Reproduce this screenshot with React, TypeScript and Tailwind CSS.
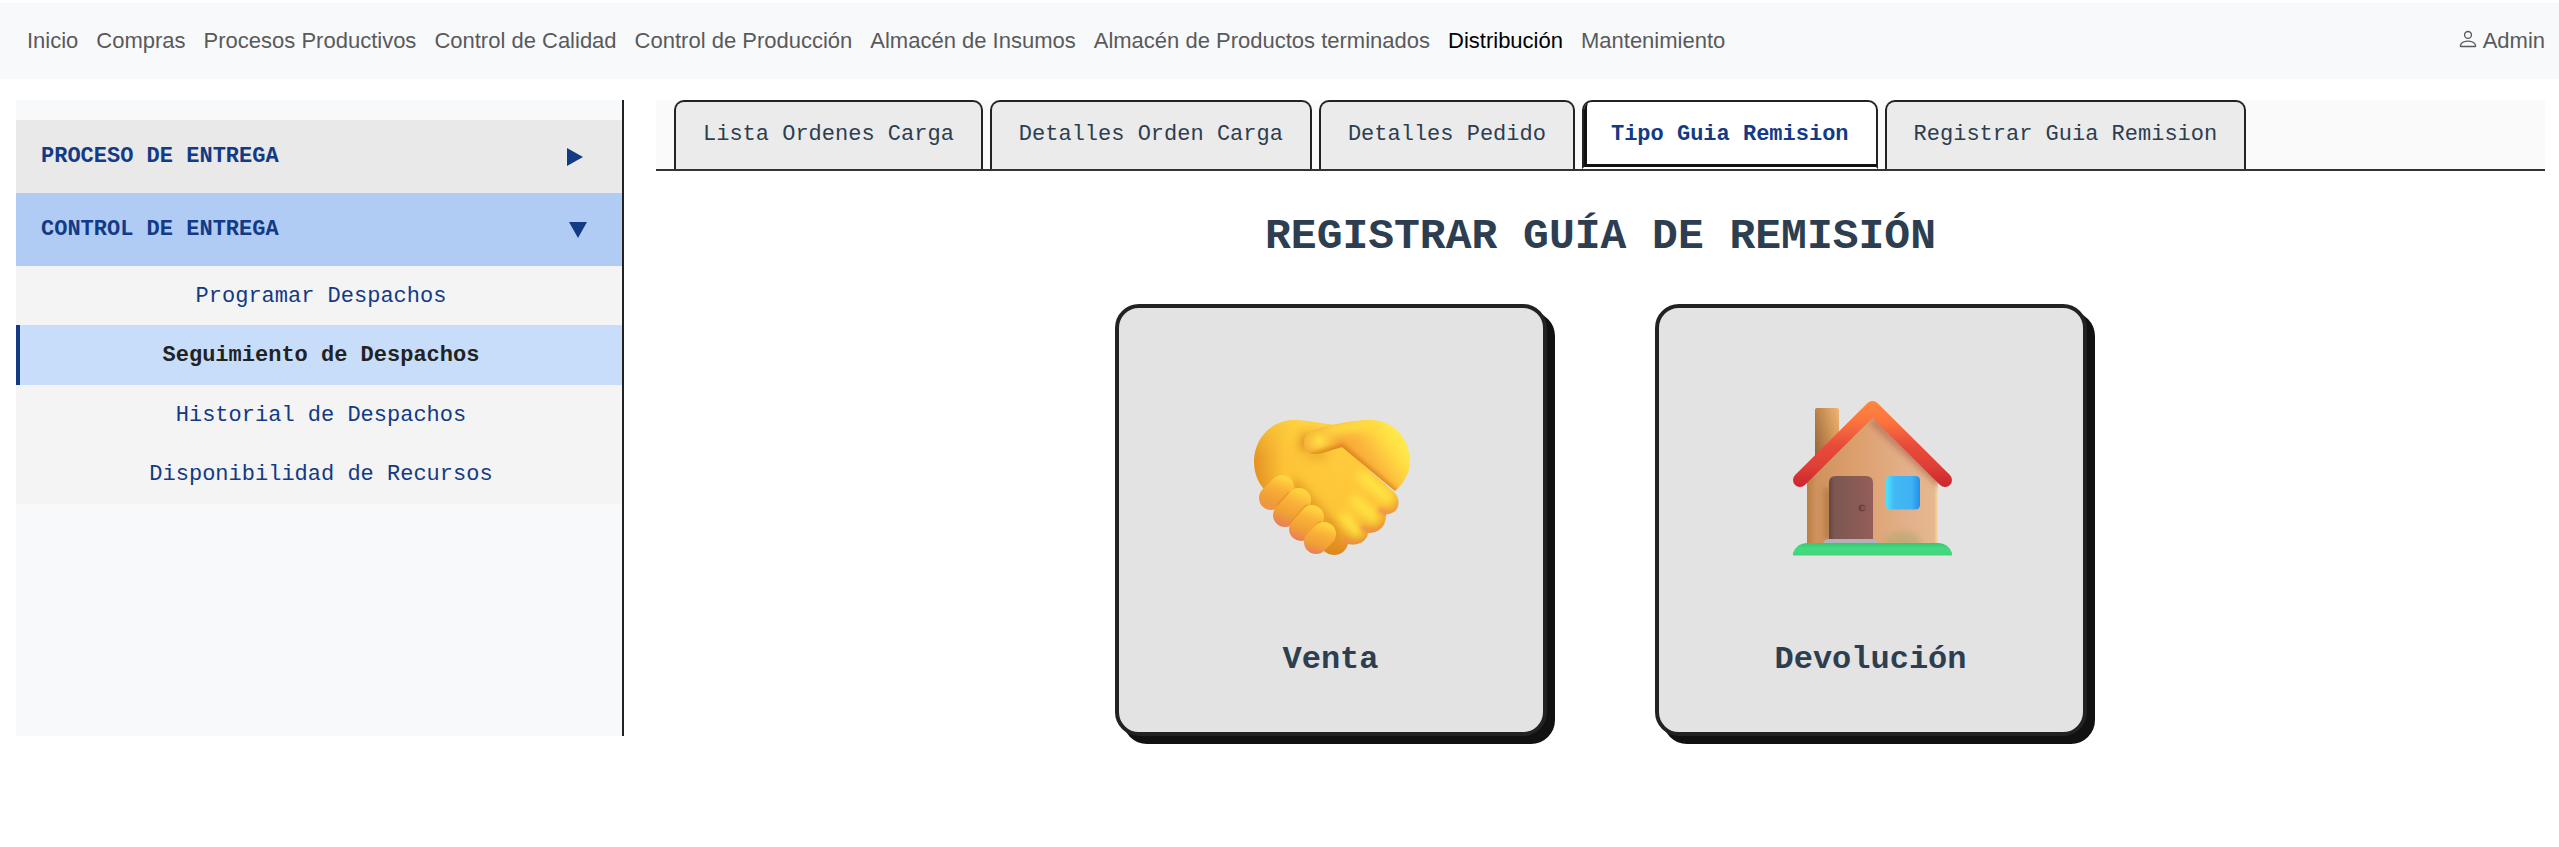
import React from "react";

const modules = [
  "Inicio",
  "Compras",
  "Procesos Productivos",
  "Control de Calidad",
  "Control de Producción",
  "Almacén de Insumos",
  "Almacén de Productos terminados",
  "Distribución",
  "Mantenimiento",
];

const deliveries = [
  "Programar Despachos",
  "Seguimiento de Despachos",
  "Historial de Despachos",
  "Disponibilidad de Recursos",
];

const tabs = [
  "Lista Ordenes Carga",
  "Detalles Orden Carga",
  "Detalles Pedido",
  "Tipo Guia Remision",
  "Registrar Guia Remision",
];

// Start and end of each curled finger's centre line.
const fingers = [
  [50, 108, 61, 97],
  [64, 125, 78, 110],
  [80, 139, 91, 127],
  [95, 152, 103, 144],
];

function Handshake() {
  return (
    <svg viewBox="0 0 220 190" className="h-[190px] w-[220px]" aria-hidden="true">
      <defs>
        <radialGradient id="palm" gradientUnits="userSpaceOnUse" cx="120" cy="70" r="96">
          <stop offset="0" stopColor="#ffcb3c" />
          <stop offset=".6" stopColor="#fdc338" />
          <stop offset="1" stopColor="#dc841c" />
        </radialGradient>
        <linearGradient id="palmTop" x1="0" y1="0" x2="0" y2="1">
          <stop offset="0" stopColor="#ffdb45" stopOpacity=".8" />
          <stop offset=".3" stopColor="#ffcb3c" stopOpacity="0" />
        </linearGradient>
        <linearGradient id="cuff" gradientUnits="userSpaceOnUse" x1="134" y1="78" x2="178" y2="48">
          <stop offset="0" stopColor="#f6a439" />
          <stop offset=".35" stopColor="#fcb53c" />
          <stop offset=".75" stopColor="#ffdb42" />
          <stop offset="1" stopColor="#ffe94a" />
        </linearGradient>
        <radialGradient id="thumbTip" gradientUnits="userSpaceOnUse" cx="98" cy="51" r="22">
          <stop offset="0" stopColor="#ffe443" />
          <stop offset="1" stopColor="#fcc63a" stopOpacity="0" />
        </radialGradient>
        {fingers.map(([x1, y1, x2, y2], i) => (
          <linearGradient key={i} id={`finger${i}`} gradientUnits="userSpaceOnUse" x1={x2} y1={y2 - 10} x2={x1 - 2} y2={y1 + 13}>
            <stop offset="0" stopColor="#ffd53f" />
            <stop offset=".3" stopColor="#fab338" />
            <stop offset=".65" stopColor="#f1a036" />
            <stop offset="1" stopColor={i === 0 ? "#ee9145" : "#e87b59"} />
          </linearGradient>
        ))}
        <filter id="soft" filterUnits="userSpaceOnUse" x="0" y="0" width="220" height="190">
          <feGaussianBlur stdDeviation="4" />
        </filter>
        <filter id="softer" filterUnits="userSpaceOnUse" x="0" y="0" width="220" height="190">
          <feGaussianBlur stdDeviation="2" />
        </filter>
        <filter id="edge" filterUnits="userSpaceOnUse" x="0" y="0" width="220" height="190">
          <feGaussianBlur stdDeviation="1" />
        </filter>
        <clipPath id="handShape">
          <path d="M42 98C34 88 33 78 33 70C34 47 52 30 74 30C90 31 104 34 113 35L122 57L173 102C181 110 178 123 167 124C166 124 165 124 165 125C165 137 157 143 147 143C146 151 138 156 127 154C125 161 120 165 113 165C108 165 104 162 102 160L60 120Z" />
        </clipPath>
        <clipPath id="cuffShape">
          <path d="M174 101L121 57C112 59 103 64 94 64C85 64 82 57 83 50C84 43 90 40 99 38C116 34 132 30 151 30C173 31 189 49 189 71C189 83 183 93 174 101Z" />
        </clipPath>
      </defs>
      <g clipPath="url(#handShape)">
        <rect x="30" y="25" width="160" height="145" fill="url(#palm)" />
        <rect x="30" y="25" width="160" height="145" fill="url(#palmTop)" />
        <path d="M84 60L86 44" stroke="#cf7a12" strokeWidth="11" opacity=".7" filter="url(#soft)" />
        <path d="M88 66L106 66" stroke="#e19a22" strokeWidth="7" opacity=".6" filter="url(#soft)" />
        <path d="M72 92L112 137L112 157" fill="none" stroke="#d98a1c" strokeWidth="9" opacity=".75" filter="url(#soft)" />
        <g stroke="#ffe443" strokeLinecap="round" filter="url(#soft)">
          <path d="M142 87L167 108" strokeWidth="12" />
          <path d="M134 110L153 128" strokeWidth="11" />
          <path d="M124 128L136 142" strokeWidth="11" />
        </g>
        <g fill="none" stroke="#f08c50" strokeWidth="4" filter="url(#softer)">
          <path d="M179 117C175 125 168 126 158 119" />
          <path d="M165 133C160 143 153 144 140 137" />
          <path d="M145 151C139 156 132 157 122 149" />
        </g>
      </g>
      <g clipPath="url(#cuffShape)">
        <rect x="80" y="25" width="112" height="84" fill="url(#cuff)" />
        <path d="M104 41C124 38 135 34 155 34" fill="none" stroke="#ffdc41" strokeWidth="12" filter="url(#soft)" />
        <path d="M82 42V64H98" fill="none" stroke="#f3a538" strokeWidth="6" filter="url(#softer)" />
        <rect x="80" y="25" width="60" height="60" fill="url(#thumbTip)" />
        <path d="M88 67L121 57L175 103" fill="none" stroke="#d57a0e" strokeWidth="6" opacity=".8" filter="url(#softer)" />
      </g>
      {fingers.map(([x1, y1, x2, y2], i) => (
        <g key={i} fill="none" strokeLinecap="round">
          <path d={`M${x1} ${y1}L${x2} ${y2}`} stroke={`url(#finger${i})`} strokeWidth="24" />
          {i < 3 && (
            <path
              d={`M${x1 + 8} ${y1 + 8}L${x2 + 8} ${y2 + 7}`}
              stroke="#c2600a"
              strokeWidth="3"
              opacity=".85"
              filter="url(#edge)"
            />
          )}
        </g>
      ))}
    </svg>
  );
}

function House() {
  return (
    <svg viewBox="0 0 220 200" className="h-[200px] w-[220px]" aria-hidden="true">
      <defs>
        <linearGradient id="wall" x1="0" y1="0" x2="1" y2="0">
          <stop offset="0" stopColor="#b98043" />
          <stop offset=".07" stopColor="#cf925f" />
          <stop offset=".4" stopColor="#dda06f" />
          <stop offset=".8" stopColor="#e3b28c" />
          <stop offset=".97" stopColor="#e6b88f" />
          <stop offset="1" stopColor="#ffdb9e" />
        </linearGradient>
        <linearGradient id="stack" x1="0" y1=".8" x2="1" y2=".1">
          <stop offset="0" stopColor="#966337" />
          <stop offset=".5" stopColor="#c48b51" />
          <stop offset="1" stopColor="#eeb271" />
        </linearGradient>
        <linearGradient id="roof" gradientUnits="userSpaceOnUse" x1="0" y1="22" x2="0" y2="107">
          <stop offset="0" stopColor="#ff8740" />
          <stop offset=".25" stopColor="#fb713e" />
          <stop offset=".5" stopColor="#e94c3a" />
          <stop offset=".75" stopColor="#df4037" />
          <stop offset="1" stopColor="#cc2430" />
        </linearGradient>
        <linearGradient id="door" x1="0" y1="0" x2="1" y2="0">
          <stop offset="0" stopColor="#65443f" />
          <stop offset=".12" stopColor="#7c5751" />
          <stop offset="1" stopColor="#945d59" />
        </linearGradient>
        <linearGradient id="pane" x1="0" y1="0" x2="1" y2="0">
          <stop offset="0" stopColor="#4be4ff" />
          <stop offset=".25" stopColor="#42b8f4" />
          <stop offset=".75" stopColor="#3fb2f5" />
          <stop offset="1" stopColor="#1f91e8" />
        </linearGradient>
        <linearGradient id="grass" x1="0" y1="0" x2="0" y2="1">
          <stop offset="0" stopColor="#3bc371" />
          <stop offset=".4" stopColor="#43db80" />
          <stop offset="1" stopColor="#42d47c" />
        </linearGradient>
        <filter id="shade" filterUnits="userSpaceOnUse" x="0" y="0" width="220" height="200">
          <feGaussianBlur stdDeviation="3" />
        </filter>
        <clipPath id="front">
          <path d="M46 98L111 35L177 98V164H46Z" />
        </clipPath>
      </defs>
      <rect x="54" y="28" width="24" height="60" rx="2" fill="url(#stack)" />
      <g clipPath="url(#front)">
        <rect x="46" y="35" width="131" height="129" fill="url(#wall)" />
        <ellipse cx="142" cy="162" rx="18" ry="11" fill="#b3a86f" opacity=".6" filter="url(#shade)" />
        <path d="M111 40L180 104" stroke="#b56a58" strokeWidth="7" opacity=".8" filter="url(#shade)" />
        <path d="M67 108V160" stroke="#94602f" strokeWidth="5" opacity=".7" filter="url(#shade)" />
      </g>
      <path d="M39 100L111.500 28L184 100" fill="none" stroke="url(#roof)" strokeWidth="14" strokeLinecap="round" strokeLinejoin="round" />
      <path d="M68 160V103Q68 96 75 96H105Q112 96 112 103V160Z" fill="url(#door)" />
      <circle cx="101" cy="128" r="3.500" fill="#6a413d" />
      <circle cx="102" cy="128" r="2.200" fill="#855550" />
      <path d="M62 164Q63 159 68 159H112Q117 159 118 164Z" fill="#b3b1b8" />
      <rect x="125" y="96" width="34" height="33.500" rx="4.500" fill="url(#pane)" />
      <path d="M32 175.500V173Q36 163 46 163H178Q188 164 191 173V175.500Z" fill="url(#grass)" />
    </svg>
  );
}

const options = [
  { label: "Venta", icon: <Handshake /> },
  { label: "Devolución", icon: <House /> },
];

export default function App() {
  return (
    <div className="min-h-screen bg-white pt-[3px] font-['Liberation_Sans',Arial,sans-serif]">
      <header className="flex h-[76px] items-center justify-between bg-[#f8f9fb] pr-[14px] pl-[27px] text-[22px] leading-8 text-[#595a5b]">
        <nav className="flex gap-[18px]">
          {modules.map((name) => (
            <a
              key={name}
              href="#"
              aria-current={name === "Distribución" ? "page" : undefined}
              className={name === "Distribución" ? "text-black" : ""}
            >
              {name}
            </a>
          ))}
        </nav>
        <a href="#" className="flex items-center gap-1">
          <svg viewBox="0 0 16 16" fill="currentColor" className="mb-1 h-[22px] w-[22px]" aria-hidden="true">
            <path d="M8 8a3 3 0 1 0 0-6 3 3 0 0 0 0 6m2-3a2 2 0 1 1-4 0 2 2 0 0 1 4 0m4 8c0 1-1 1-1 1H3s-1 0-1-1 1-4 6-4 6 3 6 4m-1-.004c-.001-.246-.154-.986-.832-1.664C11.516 10.680 10.289 10 8 10s-3.516.680-4.168 1.332c-.678.678-.83 1.418-.832 1.664z" />
          </svg>
          Admin
        </a>
      </header>

      <div className="flex items-start gap-8 pt-[21px] pr-[14px] pl-4 font-['Courier_New','Liberation_Mono',monospace] text-[22px] leading-8">
        <aside className="min-h-[636px] w-[608px] shrink-0 border-r-2 border-[#222] bg-[#f8f9fb] pt-5">
          <button type="button" className="flex h-[73px] w-full items-center justify-between bg-[#e9e9e9] pr-[38px] pl-[25px] font-bold text-[#123a85]">
            PROCESO DE ENTREGA
            <svg viewBox="0 0 18 18" className="h-[18px] w-[18px]" fill="currentColor" aria-hidden="true">
              <path d="M1 0L17 9L1 18Z" />
            </svg>
          </button>
          <button type="button" aria-expanded="true" className="flex h-[73px] w-full items-center justify-between bg-[#b0ccf5] pr-[35px] pl-[25px] font-bold text-[#123a85]">
            CONTROL DE ENTREGA
            <svg viewBox="0 0 18 18" className="h-[18px] w-[18px]" fill="currentColor" aria-hidden="true">
              <path d="M0 1H18L9 17Z" />
            </svg>
          </button>
          <ul className="bg-[#f4f4f4] pb-px text-center">
            {deliveries.map((name, i) => (
              <li key={name}>
                <a
                  href="#"
                  className={
                    i === 1
                      ? "block border-l-4 border-[#123a85] bg-[#c7ddfa] pt-[15px] pb-[13px] font-bold text-[#222]"
                      : "block border-l-4 border-transparent pt-[15px] pb-3 text-[#123a85]"
                  }
                >
                  {name}
                </a>
              </li>
            ))}
          </ul>
        </aside>

        <main className="min-w-0 flex-1">
          <div role="tablist" className="flex h-[71px] gap-[7px] border-b-2 border-[#333] bg-[#fafafa] pl-[18px]">
            {tabs.map((name, i) => (
              <button
                key={name}
                type="button"
                role="tab"
                aria-selected={i === 3}
                className={
                  i === 3
                    ? "rounded-t-[10px] border-2 border-[#222] border-b-white bg-white px-[27px] font-bold text-[#123a85] shadow-[inset_3px_-3px_0_#111]"
                    : "rounded-t-[10px] border-2 border-b-0 border-[#222] bg-[#ebebeb] px-[27px] pb-0.5 text-[#2c3e50]"
                }
              >
                {name}
              </button>
            ))}
          </div>
          <h1 className="pt-10 text-center text-[43px] leading-[52px] font-bold text-[#2c3e50]">
            REGISTRAR GUÍA DE REMISIÓN
          </h1>
          <div className="flex justify-center gap-[108px] pt-[41px]">
            {options.map(({ label, icon }) => (
              <button
                key={label}
                type="button"
                className="flex h-[432px] w-[432px] flex-col items-center justify-between rounded-3xl border-4 border-[#222] bg-[#e3e3e3] pt-[72px] pb-[52px] text-[32px] leading-10 font-bold text-[#2c3e50] shadow-[8px_8px_0_#111]"
              >
                <span className="flex h-[200px] items-end">{icon}</span>
                {label}
              </button>
            ))}
          </div>
        </main>
      </div>
    </div>
  );
}
